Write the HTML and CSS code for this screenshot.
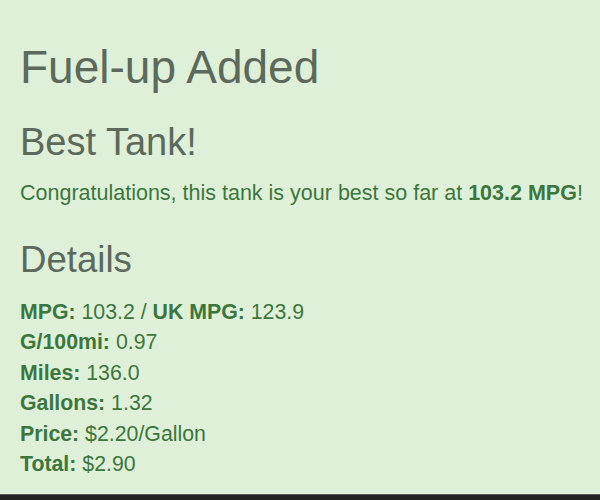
FILE: index.html
```html
<!DOCTYPE html>
<html>
<head>
<meta charset="utf-8">
<link rel="stylesheet" href="styles.css">
</head>
<body>
<main class="page">
  <h1 class="title">Fuel-up Added</h1>
  <h2 class="subtitle">Best Tank!</h2>
  <p class="message">Congratulations, this tank is your best so far at <strong>103.2 MPG</strong>!</p>
  <h2 class="section">Details</h2>
  <ul class="details">
    <li><strong>MPG:</strong> 103.2 / <strong>UK MPG:</strong> 123.9</li>
    <li><strong>G/100mi:</strong> 0.97</li>
    <li><strong>Miles:</strong> 136.0</li>
    <li><strong>Gallons:</strong> 1.32</li>
    <li><strong>Price:</strong> $2.20/Gallon</li>
    <li><strong>Total:</strong> $2.90</li>
  </ul>
</main>
<footer class="bar"></footer>
</body>
</html>
```
FILE: styles.css
```css
html, body {
  margin: 0;
  padding: 0;
  height: 100%;
}
body {
  background: #dff0d8;
  font-family: "Liberation Sans", Arial, sans-serif;
  color: #3c763d;
  display: flex;
  flex-direction: column;
  overflow: hidden;
}
.page {
  flex: 1;
  padding: 0 10px 0 20px;
}
.title {
  margin: 42px 0 0;
  font-size: 46px;
  line-height: 50px;
  font-weight: normal;
  color: #5b6a5b;
}
.subtitle {
  margin: 30px 0 0;
  font-size: 38px;
  line-height: 40px;
  font-weight: normal;
  color: #5b6a5b;
}
.message {
  margin: 19px 0 0;
  font-size: 21.5px;
  line-height: 24px;
  white-space: nowrap;
}
.section {
  margin: 35px 0 0;
  font-size: 36.6px;
  line-height: 40px;
  font-weight: normal;
  color: #5b6a5b;
}
.details {
  list-style: none;
  margin: 16.6px 0 0;
  padding: 0;
  font-size: 21.3px;
  line-height: 30.5px;
}
.bar {
  height: 5px;
  background: #222;
  border-top: 1px solid #5a5e58;
}
```
